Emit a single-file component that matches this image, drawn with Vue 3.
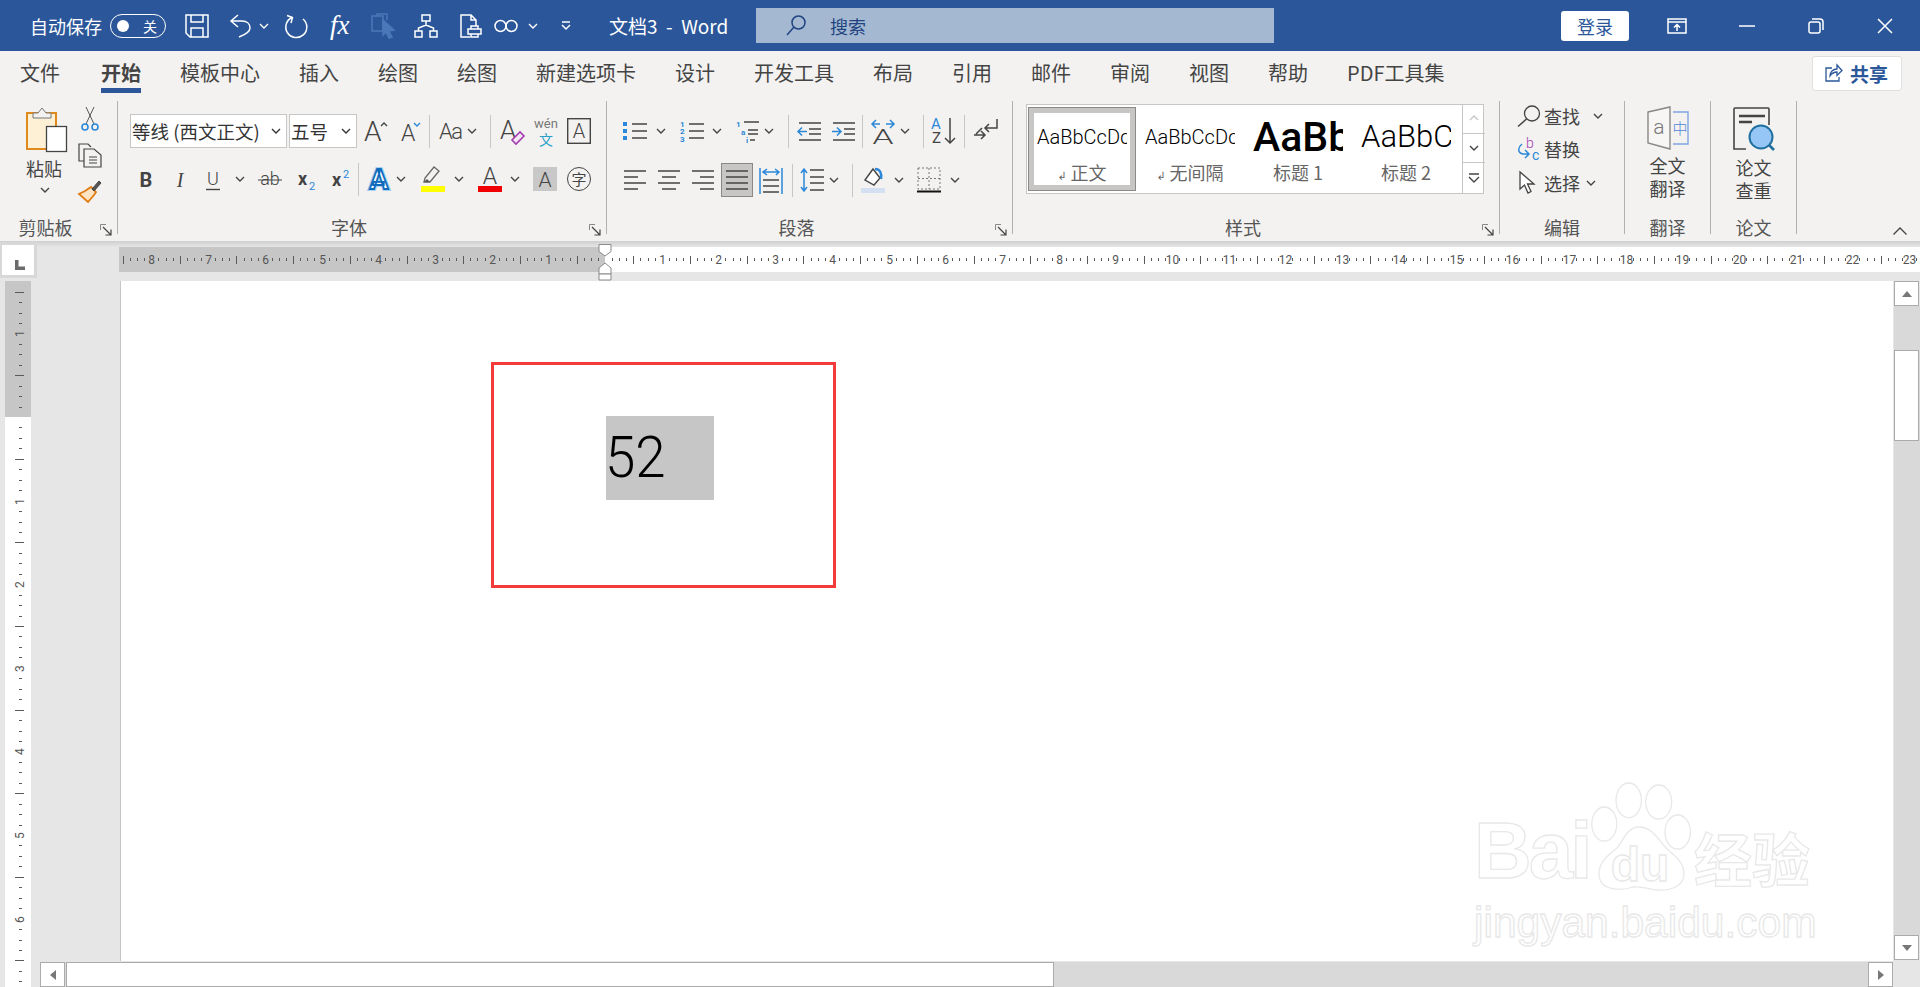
<template>
  <div class="app">
    <svg class="defs" width="0" height="0">
      <symbol id="chev" viewBox="0 0 10 6"><path d="M1 1l4 4 4-4" fill="none" stroke="currentColor" stroke-width="1.4" /></symbol>
      <symbol id="launcher" viewBox="0 0 12 12">
        <path d="M.5 6V.5H6" fill="none" stroke="#8a8886" />
        <path d="M3 3l8 8M11 5.5V11H5.5" fill="none" stroke="#444" stroke-width="1.2" />
      </symbol>
    </svg>

    <!-- 标题栏 -->
    <header class="titlebar">
      <span class="autosave">自动保存</span>
      <div class="toggle"><i class="knob"></i><span>关</span></div>
      <svg class="qat ml-19" width="24" height="24" viewBox="0 0 24 24"><path d="M1 1h22v22H5l-4-4zM6 1v7h12V1M6 23v-9h12v9" /></svg>
      <svg class="qat ml-20" width="22" height="24" viewBox="0 0 22 24"><path d="M9 1L2 7l7 6M2 7h11c5 0 8 3 8 7 0 3-3 6-11 9" /></svg>
      <svg class="chev-w ml-8" width="10" height="6"><use href="#chev" /></svg>
      <svg class="qat ml-15" width="25" height="24" viewBox="0 0 25 24"><path d="M8 3.5A10.5 10.5 0 1 0 19 5M3 1.5L8.5 3.5 7 9" /></svg>
      <span class="fx ml-21">fx</span>
      <svg class="qat off ml-20" width="25" height="24" viewBox="0 0 25 24"><path d="M1 2h11v15H1zM6 2V0h10v6" /><path class="fill" d="M12 6l11 10-5 1 3 6-3 1-3-6-3 3z" /></svg>
      <svg class="qat ml-18" width="24" height="24" viewBox="0 0 24 24"><path d="M8 1h8v6H8zM1 17h7v6H1zM16 17h7v6h-7zM12 7v4M4.5 17v-3l7.5-3 7.5 3v3" /></svg>
      <svg class="qat ml-22" width="22" height="24" viewBox="0 0 22 24"><path d="M10 23H1V1h10l5 5v6M11 1v5h5M8 15h13v5H8zM11 15v-3h7v3M11 20v3h7v-3" /></svg>
      <svg class="qat ml-12" width="24" height="14" viewBox="0 0 24 14"><circle cx="6.5" cy="7" r="5.5" /><circle cx="17.5" cy="7" r="5.5" /></svg>
      <svg class="chev-w ml-10" width="10" height="6"><use href="#chev" /></svg>
      <svg class="qat ml-23" width="10" height="10" viewBox="0 0 10 10"><path d="M1 1h8M1 4l4 4 4-4" /></svg>
      <span class="doc-title">文档3&nbsp; - &nbsp;Word</span>
      <div class="search">
        <svg class="qat search-ico" width="20" height="21" viewBox="0 0 20 21"><circle cx="12.5" cy="7.5" r="6.5" /><path d="M8 12L1 20" /></svg>
        <span>搜索</span>
      </div>
      <button class="login">登录</button>
      <svg class="qat ml-38" width="20" height="16" viewBox="0 0 20 16"><path d="M1 1h18v14H1zM1 4h18M10 13V7M7 9.500l3-3 3 3" /></svg>
      <svg class="qat ml-52" width="16" height="2" viewBox="0 0 16 2"><path d="M0 1h16" /></svg>
      <svg class="qat ml-53" width="16" height="16" viewBox="0 0 16 16"><rect x="1" y="4" width="11" height="11" rx="2" /><path d="M4 1h8a3 3 0 0 1 3 3v8" /></svg>
      <svg class="qat ml-53" width="16" height="16" viewBox="0 0 16 16"><path d="M1 1l14 14M15 1L1 15" /></svg>
    </header>

    <!-- 选项卡 -->
    <nav class="tabs">
      <span v-for="tab in tabs" :key="tab.id" :class="['tab', { active: tab.active }]">{{ tab.label }}</span>
      <button class="share">
        <svg width="18" height="18" viewBox="0 0 18 18" fill="none" stroke="#2b579a" stroke-width="1.3"><path d="M7 4H1v13h13v-4M5 12c0-4 3-7 7-7V1l5 5.500-5 5V8c-3 0-5 1-7 4z" /></svg>
        <span>共享</span>
      </button>
    </nav>

    <!-- 功能区 -->
    <section class="ribbon">
      <div class="group g-clip">
        <div class="body clip-body">
          <div class="paste">
            <svg width="41" height="45" viewBox="0 0 41 45">
              <rect x="1" y="6" width="29" height="36" fill="#fdf0d5" stroke="#e08a1e" stroke-width="2" />
              <path d="M7 11V6h5l4-5 4 5h5v5z" fill="#f3f2f1" stroke="#777" />
              <rect x="20.500" y="19.500" width="20" height="25" fill="#fff" stroke="#444" stroke-width="1.300" />
            </svg>
            <span class="paste-label">粘贴</span>
            <svg class="chev" width="10" height="6"><use href="#chev" /></svg>
          </div>
          <div class="clip-side">
            <svg width="24" height="24" viewBox="0 0 24 24" fill="none">
              <path d="M8 0l8 17M16 0L8 17" stroke="#555" />
              <circle cx="7" cy="20" r="3" stroke="#2b88d8" stroke-width="1.600" /><circle cx="17" cy="20" r="3" stroke="#2b88d8" stroke-width="1.600" />
            </svg>
            <svg width="24" height="24" viewBox="0 0 24 24" fill="none" stroke="#444" stroke-width="1.200">
              <path d="M6 18H1V1h9l3 3M6 6h10l7 6v12H6z" fill="#f3f2f1" /><path d="M11 14h8M11 17h8M11 20h8" stroke-width="1" />
            </svg>
            <svg width="24" height="24" viewBox="0 0 24 24" fill="none">
              <path d="M13 8l5 5-2 3-6 7-9-8 6-3z" fill="#fbe3c4" stroke="#e07b10" stroke-width="1.800" />
              <path d="M14 10l7-8 2 2-7 8z" fill="#555" stroke="#444" />
            </svg>
          </div>
        </div>
        <div class="foot"><span class="glabel">剪贴板</span><svg class="launch" width="12" height="12"><use href="#launcher" /></svg></div>
      </div>

      <div class="group g-font">
        <div class="body">
          <div class="row row-font1">
            <div class="select font-sel"><span>等线 (西文正文)</span><svg width="10" height="6"><use href="#chev" /></svg></div>
            <div class="select size-sel ml-2"><span>五号</span><svg width="10" height="6"><use href="#chev" /></svg></div>
            <svg class="ml-7" width="24" height="24" viewBox="0 0 24 24"><text x="0" y="22" font-size="28">A</text><path d="M17 7l3-3 3 3" fill="none" stroke="#444" stroke-width="1.400" /></svg>
            <svg class="ml-13" width="20" height="24" viewBox="0 0 20 24"><text x="0" y="22" font-size="23">A</text><path d="M13 4l3 3 3-3" fill="none" stroke="#2b88d8" stroke-width="1.400" /></svg>
            <i class="sep ml-8"></i>
            <svg class="ml-9" width="24" height="24" viewBox="0 0 24 24"><text x="0" y="20" font-size="22" textLength="24">Aa</text></svg>
            <svg class="ml-4 chev" width="10" height="6"><use href="#chev" /></svg>
            <i class="sep ml-13"></i>
            <svg class="ml-9" width="24" height="26" viewBox="0 0 24 26"><text x="0" y="21" font-size="26">A</text><path d="M12 22l8-8 4 4-8 8z" fill="#f3e6f5" stroke="#a43cb0" stroke-width="1.600" /></svg>
            <div class="wen ml-11"><span class="wen-py">wén</span><span class="wen-z">文</span></div>
            <svg class="ml-10" width="24" height="26" viewBox="0 0 24 26"><rect x=".7" y=".7" width="22.600" height="24.600" fill="none" stroke="#444" stroke-width="1.400" /><text x="12" y="20" font-size="20" text-anchor="middle">A</text></svg>
          </div>
          <div class="row row-font2">
            <svg width="24" height="24" viewBox="0 0 24 24"><text class="bold" x="12" y="20" font-size="20" text-anchor="middle">B</text></svg>
            <svg class="ml-10" width="24" height="24" viewBox="0 0 24 24"><text class="serif" x="12" y="20" font-size="20" font-style="italic" text-anchor="middle">I</text></svg>
            <svg class="ml-9" width="24" height="24" viewBox="0 0 24 24"><text x="12" y="18" font-size="18" text-anchor="middle">U</text><path d="M5 22.500h14" stroke="#444" stroke-width="1.400" /></svg>
            <svg class="ml-10 chev" width="10" height="6"><use href="#chev" /></svg>
            <svg class="ml-13" width="24" height="24" viewBox="0 0 24 24"><text x="12" y="18" font-size="18" text-anchor="middle">ab</text><path d="M0 13h24" stroke="#444" /></svg>
            <svg class="ml-13" width="24" height="24" viewBox="0 0 24 24"><text class="bold" x="3" y="18" font-size="18">x</text><text class="blue" x="14" y="23" font-size="11">2</text></svg>
            <svg class="ml-10" width="24" height="24" viewBox="0 0 24 24"><text class="bold" x="3" y="19" font-size="18">x</text><text class="blue" x="14" y="11" font-size="11">2</text></svg>
            <i class="sep ml-5"></i>
            <svg class="ml-8" width="24" height="26" viewBox="0 0 24 26"><text class="a-glow" x="12" y="23" font-size="28" text-anchor="middle">A</text><text class="a-outline" x="12" y="23" font-size="28" text-anchor="middle">A</text></svg>
            <svg class="ml-5 chev" width="10" height="6"><use href="#chev" /></svg>
            <svg class="ml-15" width="24" height="26" viewBox="0 0 24 26"><path d="M3 16l1-4 9-11 5 4-9 11z" fill="#f3f2f1" stroke="#666" stroke-width="1.300" /><path d="M3 16l6 0-3-3z" fill="#555" /><rect y="20" width="24" height="6" fill="#ffff00" /></svg>
            <svg class="ml-9 chev" width="10" height="6"><use href="#chev" /></svg>
            <svg class="ml-14" width="24" height="26" viewBox="0 0 24 26"><text x="12" y="18" font-size="23" text-anchor="middle">A</text><rect y="20" width="24" height="6" fill="#f00000" /></svg>
            <svg class="ml-8 chev" width="10" height="6"><use href="#chev" /></svg>
            <svg class="ml-13" width="24" height="24" viewBox="0 0 24 24"><rect width="24" height="24" fill="#c8c8c8" /><text x="12" y="20" font-size="21" text-anchor="middle">A</text></svg>
            <div class="ringed ml-10">字</div>
          </div>
        </div>
        <div class="foot"><span class="glabel">字体</span><svg class="launch" width="12" height="12"><use href="#launcher" /></svg></div>
      </div>

      <div class="group g-para">
        <div class="body">
          <div class="row row-para1">
            <svg width="24" height="24" viewBox="0 0 24 24"><path class="ln" d="M9 5h15M9 12h15M9 19h15" /><path fill="#2b88d8" d="M0 3h4v4H0zM0 10h4v4H0zM0 17h4v4H0z" /></svg>
            <svg class="ml-9 chev" width="10" height="6"><use href="#chev" /></svg>
            <svg class="ml-14" width="24" height="24" viewBox="0 0 24 24"><path class="ln" d="M9 5h15M9 12h15M9 19h15" /><text class="blue bold" x="0" y="8" font-size="8">1</text><text class="blue bold" x="0" y="15" font-size="8">2</text><text class="blue bold" x="0" y="23" font-size="8">3</text></svg>
            <svg class="ml-8 chev" width="10" height="6"><use href="#chev" /></svg>
            <svg class="ml-14" width="24" height="24" viewBox="0 0 24 24"><path class="ln" d="M8 3h15M12 11h10M12 15h10M14 21h5" /><text class="blue bold" x="0" y="8" font-size="8">1</text><text class="blue bold" x="5" y="16" font-size="8">a</text><text class="blue bold" x="10" y="24" font-size="8">i</text></svg>
            <svg class="ml-4 chev" width="10" height="6"><use href="#chev" /></svg>
            <i class="sep ml-14"></i>
            <svg class="ml-8" width="24" height="24" viewBox="0 0 24 24"><path class="ln" d="M2 4h22M12 10h12M12 15h12M2 21h22" /><path class="ar" d="M10 12.500H1M5 8.500l-4 4 4 4" /></svg>
            <svg class="ml-10" width="24" height="24" viewBox="0 0 24 24"><path class="ln" d="M2 4h22M13 10h11M13 15h11M2 21h22" /><path class="ar" d="M1 12.500h9M6 8.500l4 4-4 4" /></svg>
            <i class="sep ml-7"></i>
            <svg class="ml-8" width="24" height="26" viewBox="0 0 24 26"><path class="ar" d="M1 6h8M5 2L1 6l4 4M15 6h8M19 2l4 4-4 4" /><text transform="translate(12 26) scale(1.6 1)" font-size="21" text-anchor="middle">A</text></svg>
            <svg class="ml-5 chev" width="10" height="6"><use href="#chev" /></svg>
            <i class="sep ml-13"></i>
            <svg class="ml-7" width="26" height="28" viewBox="0 0 26 28"><text class="blue" x="0" y="12" font-size="15">A</text><text class="reg" x="1" y="26" font-size="15">Z</text><path class="ln" d="M19 1v25M14 21l5 5 5-5" /></svg>
            <i class="sep ml-7"></i>
            <svg class="ml-8" width="25" height="24" viewBox="0 0 25 24"><path class="ln" d="M24 0v9H12M16 5l-4 4 4 4M1 16h11M8 12l4 4-4 4M9 9L3 15" /></svg>
          </div>
          <div class="row row-para2">
            <svg width="22" height="24" viewBox="0 0 22 24"><path class="ln" d="M0 3h22M0 9h14M0 15h22M0 21h14" /></svg>
            <svg class="ml-12" width="22" height="24" viewBox="0 0 22 24"><path class="ln" d="M0 3h22M4 9h14M0 15h22M4 21h14" /></svg>
            <svg class="ml-12" width="22" height="24" viewBox="0 0 22 24"><path class="ln" d="M0 3h22M8 9h14M0 15h22M8 21h14" /></svg>
            <div class="pressed ml-7"><svg width="22" height="24" viewBox="0 0 22 24"><path class="ln" d="M0 3h22M0 9h22M0 15h22M0 21h22" /></svg></div>
            <svg class="ml-6" width="24" height="28" viewBox="0 0 24 28"><path class="ar" d="M1 2v26M23 2v26M4 6h16M8 3L4 6l4 3M16 3l4 3-3 3" /><path class="ln" d="M4 14h16M4 20h16M4 26h16" /></svg>
            <i class="sep ml-9"></i>
            <svg class="ml-7" width="24" height="26" viewBox="0 0 24 26"><path class="ar" d="M4 2v22M1 6l3-4 3 4M1 20l3 4 3-4" /><path class="ln" d="M10 3h14M10 10h14M10 16h14M10 23h14" /></svg>
            <svg class="ml-5 chev" width="10" height="6"><use href="#chev" /></svg>
            <i class="sep ml-13"></i>
            <svg class="ml-8" width="24" height="26" viewBox="0 0 24 26"><path d="M4 13l8-11 7 9-6 7z" fill="#fff" stroke="#444" stroke-width="1.400" /><path d="M14 2c5 0 7 4 6 10" fill="none" stroke="#2b88d8" stroke-width="2.500" /><rect y="21" width="24" height="5" fill="#d4e0f2" /></svg>
            <svg class="ml-9 chev" width="10" height="6"><use href="#chev" /></svg>
            <svg class="ml-13" width="24" height="26" viewBox="0 0 24 26"><path d="M1 1h22v21H1zM1 11.500h22M12 1v21" fill="none" stroke="#777" stroke-dasharray="2 2" /><path d="M0 24.500h24" stroke="#111" stroke-width="2" /></svg>
            <svg class="ml-9 chev" width="10" height="6"><use href="#chev" /></svg>
          </div>
        </div>
        <div class="foot"><span class="glabel">段落</span><svg class="launch" width="12" height="12"><use href="#launcher" /></svg></div>
      </div>

      <div class="group g-style">
        <div class="body">
          <div class="gallery">
            <div v-for="s in styles" :key="s.name" :class="['style-item', { selected: s.selected }]">
              <div :class="['sample', s.cls]">AaBbCcDd</div>
              <div class="style-name"><span v-if="s.mark" class="mark">↲</span>{{ s.name }}</div>
            </div>
            <div class="gallery-btns">
              <div class="gbtn disabled"><svg width="10" height="6"><use href="#chev" transform="rotate(180 5 3)" /></svg></div>
              <div class="gbtn"><svg width="10" height="6"><use href="#chev" /></svg></div>
              <div class="gbtn more"><svg width="12" height="11" viewBox="0 0 12 11"><path d="M1 1h10M1 4l5 5 5-5" fill="none" stroke="#444" stroke-width="1.400" /></svg></div>
            </div>
          </div>
        </div>
        <div class="foot"><span class="glabel">样式</span><svg class="launch" width="12" height="12"><use href="#launcher" /></svg></div>
      </div>

      <div class="group g-edit">
        <div class="body edit-body">
          <div class="edit-row">
            <svg width="24" height="22" viewBox="0 0 24 22" fill="none" stroke="#444" stroke-width="1.300"><circle cx="15" cy="8.500" r="7.500" /><path d="M9.500 14L1 21.500" stroke-width="1.600" /></svg>
            <span>查找</span><svg class="chev find-chev" width="10" height="6"><use href="#chev" /></svg>
          </div>
          <div class="edit-row">
            <svg width="24" height="24" viewBox="0 0 24 24"><text class="purple" x="9" y="11" font-size="14">b</text><text class="blue" x="15" y="23" font-size="14">c</text><path class="ar" d="M5 7C0 11 1 16 6 17h6M8 13l4 4-4 4" /></svg>
            <span>替换</span>
          </div>
          <div class="edit-row">
            <svg width="24" height="23" viewBox="0 0 24 23"><path d="M3 1v17l4.500-4L11 22l3-1.500L10.500 13H17z" fill="#fff" stroke="#444" stroke-width="1.300" /></svg>
            <span>选择</span><svg class="chev sel-chev" width="10" height="6"><use href="#chev" /></svg>
          </div>
        </div>
        <div class="foot"><span class="glabel solo">编辑</span></div>
      </div>

      <div class="group g-tool">
        <div class="body tool-body">
          <svg width="42" height="42" viewBox="0 0 42 42">
            <path d="M1 5L23 0v42L1 36z" fill="#f7f6f5" stroke="#8a8886" stroke-width="1.400" />
            <text class="t-gray" x="12" y="27" font-size="21" text-anchor="middle">a</text>
            <path d="M26 5h15v32H26" fill="none" stroke="#7ea6e0" stroke-width="1.400" />
            <text class="t-cn" x="33" y="27" font-size="15" text-anchor="middle">中</text>
          </svg>
          <div class="tool-text">全文<br />翻译</div>
        </div>
        <div class="foot"><span class="glabel solo">翻译</span></div>
      </div>

      <div class="group g-tool">
        <div class="body tool-body">
          <svg width="42" height="44" viewBox="0 0 42 44">
            <path d="M13 42H1V2q0-1 1-1h33q1 0 1 1v16" fill="none" stroke="#444" stroke-width="1.600" />
            <path d="M6 9h26M6 15h13" stroke="#444" stroke-width="2.400" />
            <circle cx="28" cy="30" r="11.500" fill="#95c6f5" stroke="#1f6f9f" stroke-width="2" />
            <path d="M36 38l5 5" stroke="#1f6f9f" stroke-width="2.600" />
          </svg>
          <div class="tool-text">论文<br />查重</div>
        </div>
        <div class="foot"><span class="glabel solo">论文</span></div>
      </div>

      <svg class="collapse" width="14" height="8" viewBox="0 0 14 8"><path d="M.5 7.500L7 1l6.500 6.500" fill="none" stroke="#444" stroke-width="1.300" /></svg>
    </section>

    <!-- 标尺 -->
    <div class="ruler-row">
      <div class="corner"><svg width="10" height="10" viewBox="0 0 10 10"><path d="M0 0h3.500v6.500H10V10H0z" fill="#6b6b6b" /></svg></div>
      <svg class="hruler" width="1801" height="40" viewBox="0 0 1801 40">
        <rect y="6" width="486" height="25" fill="#c6c6c6" />
        <rect x="486" y="6" width="1315" height="25" fill="#fff" />
        <path :d="hTicks" stroke="#5a5a5a" fill="none" />
        <text v-for="n in hLabels" :key="n.x" class="rlabel" :x="n.x" y="23" text-anchor="middle" font-size="12">{{ n.text }}</text>
        <path d="M480 3.500h12v7l-6 4.500-6-4.500z" fill="#fff" stroke="#8a8a8a" />
        <path d="M486 22l6 5v6h-12v-6z" fill="#fff" stroke="#8a8a8a" />
        <path d="M480 33h12v6h-12z" fill="#fff" stroke="#8a8a8a" />
      </svg>
    </div>

    <div class="workspace">
      <svg class="vruler" width="26" height="706" viewBox="0 0 26 706">
        <rect width="26" height="136" fill="#c6c6c6" />
        <rect y="136" width="26" height="570" fill="#fff" />
        <path :d="vTicks" stroke="#5a5a5a" fill="none" />
        <text v-for="n in vLabels" :key="n.y" class="rlabel" x="19" :y="n.y" :transform="`rotate(-90 19 ${n.y})`" text-anchor="middle" font-size="12">{{ n.text }}</text>
      </svg>

      <div class="main">
        <div class="page">
          <div class="red-box">
            <div class="selection"><span class="num">52</span></div>
          </div>
          <!-- 水印 -->
          <div class="watermark">
            <div class="wm-top">
              <span class="wm-bai">Bai</span>
              <svg class="wm-paw" width="100" height="109" viewBox="0 0 100 109">
                <ellipse cx="13.300" cy="41" rx="12.500" ry="17" />
                <ellipse cx="37.700" cy="17.300" rx="12.700" ry="17.300" />
                <ellipse cx="67.700" cy="19" rx="13" ry="17" />
                <ellipse cx="86.700" cy="49" rx="12.700" ry="17" />
                <path d="M48 44C62 44 68 58 76 66C84 73 93 79 93 91C93 104 78 108 66 107C58 106 50 103 42 104C30 108 8 108 8 91C8 78 18 72 26 65C32 58 36 44 48 44Z" />
                <text x="49" y="98" font-size="48" text-anchor="middle" class="wm-du">du</text>
              </svg>
              <span class="wm-cn">经验</span>
            </div>
            <div class="wm-url">jingyan.baidu.com</div>
          </div>
        </div>
        <div class="hscroll">
          <div class="sbtn"><i class="tri-left"></i></div>
          <div class="hthumb"></div>
          <div class="sbtn hright"><i class="tri-right"></i></div>
        </div>
      </div>

      <div class="vscroll">
        <div class="sbtn"><i class="tri-up"></i></div>
        <div class="vtrack"><div class="vthumb"></div></div>
        <div class="sbtn"><i class="tri-down"></i></div>
      </div>
    </div>
  </div>
</template>

<script setup>
const tabs = ["文件", "开始", "模板中心", "插入", "绘图", "绘图", "新建选项卡", "设计", "开发工具", "布局", "引用", "邮件", "审阅", "视图", "帮助", "PDF工具集"]
  .map((label, id) => ({ id, label, active: label === "开始" }));

const styles = [
  { name: "正文", cls: "s-normal", mark: true, selected: true },
  { name: "无间隔", cls: "s-normal", mark: true },
  { name: "标题 1", cls: "s-h1" },
  { name: "标题 2", cls: "s-h2" }
];

// 标尺刻度：每英寸分 8 格，整数处写数字，半格画长线
const H_UNIT = 56.7;
const V_UNIT = 83.6;

let h = "";
const hLabels = [];
for (let i = -68; i <= 185; i++) {
  const x = Math.round(486 + (i * H_UNIT) / 8) + 0.5;
  if (i % 8 === 0) {
    if (i !== 0) hLabels.push({ x, text: Math.abs(i / 8) });
  } else if (i % 4 === 0) {
    h += `M${x} 15v8`;
  } else {
    h += `M${x} 17v3`;
  }
}
const hTicks = h;

let v = "";
const vLabels = [];
for (let i = -12; i <= 67; i++) {
  const y = Math.round(136 + (i * V_UNIT) / 8) + 0.5;
  if (i % 8 === 0) {
    if (i !== 0) vLabels.push({ y, text: Math.abs(i / 8) });
  } else if (i % 4 === 0) {
    v += `M10 ${y}h9`;
  } else {
    v += `M14 ${y}h3`;
  }
}
const vTicks = v;
</script>

<style>
html, body { margin: 0; background: #e6e6e6; overflow: hidden; }
</style>

<style scoped>
.app {
  width: 1920px;
  height: 987px;
  overflow: hidden;
  display: flex;
  flex-direction: column;
  background: #e6e6e6;
  font-family: "Noto Sans CJK SC", "Noto Sans", sans-serif;
  color: #444;
}
.defs { position: absolute; }
svg { flex: none; display: block; overflow: visible; }
text { font-family: Roboto, "Noto Sans CJK SC", sans-serif; fill: #444; font-weight: 300; }
text.blue { fill: #2b88d8; font-weight: 400; }
text.bold { font-weight: 700; }
text.reg { font-weight: 400; }
text.serif { font-family: "Liberation Serif", serif; }
text.purple { fill: #a43cb0; }
text.t-gray { fill: #777; }
text.t-cn { fill: #4f86d8; }
text.a-glow { font-weight: 700; fill: none; stroke: #a8d0f0; stroke-width: 4; }
text.a-outline { font-weight: 700; fill: #fff; stroke: #0f6cbd; stroke-width: 1.800; }
.ln { fill: none; stroke: #444; stroke-width: 1.5; }
.ar { fill: none; stroke: #2b88d8; stroke-width: 1.5; }

.ml-2 { margin-left: 2px; } .ml-4 { margin-left: 4px; } .ml-5 { margin-left: 5px; }
.ml-6 { margin-left: 6px; } .ml-7 { margin-left: 7px; } .ml-8 { margin-left: 8px; }
.ml-9 { margin-left: 9px; } .ml-10 { margin-left: 10px; } .ml-11 { margin-left: 11px; }
.ml-12 { margin-left: 12px; } .ml-13 { margin-left: 13px; } .ml-14 { margin-left: 14px; }
.ml-15 { margin-left: 15px; } .ml-18 { margin-left: 18px; } .ml-19 { margin-left: 19px; }
.ml-20 { margin-left: 20px; } .ml-21 { margin-left: 21px; } .ml-22 { margin-left: 22px; }
.ml-23 { margin-left: 23px; } .ml-38 { margin-left: 38px; } .ml-52 { margin-left: 52px; }
.ml-53 { margin-left: 53px; }

/* 标题栏 */
.titlebar {
  height: 51px;
  flex: none;
  display: flex;
  align-items: center;
  padding-left: 30px;
  background: #2b579a;
  color: #fff;
}
.autosave { width: 71px; font-size: 18px; white-space: nowrap; }
.toggle {
  box-sizing: border-box;
  width: 56px;
  height: 24px;
  margin-left: 9px;
  display: flex;
  align-items: center;
  border: 1.500px solid #fff;
  border-radius: 12px;
  font-size: 14px;
}
.knob { width: 12px; height: 12px; margin-left: 6px; border-radius: 50%; background: #fff; }
.toggle span { margin-left: 14px; }
.qat { fill: none; stroke: #fff; stroke-width: 1.500; }
.qat.off { stroke: #4b78b8; }
.qat.off .fill { fill: #4b78b8; }
.chev-w { color: #fff; }
.fx {
  width: 21px;
  font: italic 400 27px "Liberation Serif", serif;
}
.doc-title { margin-left: 38px; width: 147px; font-size: 19px; white-space: nowrap; }
.search {
  width: 518px;
  height: 35px;
  display: flex;
  align-items: center;
  background: #a5b8d2;
  color: #1f4480;
  font-size: 18px;
}
.search-ico { stroke: #1f4480; margin-left: 30px; margin-right: 24px; }
.login {
  width: 68px;
  height: 30px;
  margin-left: 287px;
  border: 0;
  border-radius: 3px;
  background: #fff;
  color: #2b579a;
  font: 18px "Noto Sans CJK SC", sans-serif;
  padding: 0;
}

/* 选项卡 */
.tabs {
  height: 44px;
  flex: none;
  display: flex;
  align-items: center;
  gap: 39px;
  padding-left: 20px;
  background: #f3f2f1;
  font-size: 20px;
  white-space: nowrap;
}
.tab { position: relative; height: 44px; line-height: 44px; color: #444; }
.tab:first-child { margin-right: 2px; }
.tab.active { font-weight: 700; }
.tab.active::after {
  content: "";
  position: absolute;
  left: 0;
  right: 0;
  bottom: 2px;
  height: 5px;
  background: #2b579a;
}
.share {
  box-sizing: border-box;
  width: 90px;
  height: 35px;
  margin: 0 18px 0 auto;
  padding: 0 0 0 12px;
  display: flex;
  align-items: center;
  gap: 7px;
  background: #fff;
  border: 1px solid #e1dfdd;
  border-radius: 3px;
  color: #2b579a;
  font: 700 19px "Noto Sans CJK SC", sans-serif;
}

/* 功能区 */
.ribbon {
  position: relative;
  height: 146px;
  flex: none;
  display: flex;
  align-items: flex-start;
  padding-top: 6px;
  box-sizing: border-box;
  background: #f3f2f1;
}
.group {
  box-sizing: border-box;
  height: 133px;
  flex: none;
  display: flex;
  flex-direction: column;
  border-right: 1px solid #b3b0ad;
}
.g-clip { width: 118px; }
.g-font { width: 489px; }
.g-para { width: 406px; }
.g-style { width: 487px; }
.g-edit { width: 125px; }
.g-tool { width: 86px; }
.body { flex: 1; min-height: 0; }
.foot { height: 18px; display: flex; flex: none; }
.glabel { flex: 1; text-align: center; font-size: 18px; line-height: 22px; color: #555; white-space: nowrap; }
.launch { margin: 8px 5px 0 9px; }
.chev { color: #444; }

/* 剪贴板 */
.clip-body { display: flex; padding: 6px 0 0 24px; }
.paste { width: 41px; margin-left: 2px; display: flex; flex-direction: column; align-items: center; }
.paste-label { margin-top: 3px; width: 37px; margin-left: -4px; font-size: 18px; line-height: 26px; }
.paste .chev { margin: 6px 0 0 -4px; }
.clip-side { margin-left: 11px; display: flex; flex-direction: column; gap: 12px; }

/* 行 */
.row { height: 34px; display: flex; align-items: center; }
.row-font1 { margin-top: 13px; padding-left: 12px; }
.row-font2 { margin-top: 14px; padding-left: 16px; }
.row-para1 { margin-top: 13px; padding-left: 16px; }
.row-para2 { margin-top: 15px; padding-left: 17px; }
.sep { width: 1px; height: 33px; background: #c8c6c4; flex: none; }
.select {
  box-sizing: border-box;
  height: 34px;
  display: flex;
  align-items: center;
  justify-content: space-between;
  padding: 0 5px 0 1px;
  background: #fff;
  border: 1px solid #c8c6c4;
  font-size: 18.500px;
  color: #333;
  white-space: nowrap;
}
.font-sel { width: 157px; }
.size-sel { width: 68px; }
.wen { width: 22px; display: flex; flex-direction: column; align-items: center; line-height: 1; }
.wen-py { font: 13px Roboto, sans-serif; color: #777; }
.wen-z { font-size: 14px; color: #2aa0c8; margin-top: 1px; }
.ringed {
  box-sizing: border-box;
  width: 24px;
  height: 24px;
  border: 1.300px solid #444;
  border-radius: 50%;
  font-size: 15px;
  line-height: 21px;
  text-align: center;
  flex: none;
}
.pressed {
  box-sizing: border-box;
  width: 32px;
  height: 34px;
  display: flex;
  align-items: center;
  justify-content: center;
  background: #c8c6c4;
  border: 1px solid #8a8886;
  flex: none;
}

/* 样式库 */
.gallery {
  box-sizing: border-box;
  width: 458px;
  height: 90px;
  margin: 3px 0 0 13px;
  padding: 2px 0 0 1px;
  display: flex;
  background: #fff;
  border: 1px solid #c8c6c4;
}
.style-item { box-sizing: border-box; width: 108px; height: 84px; padding: 6px 9px 0; flex: none; }
.style-item.selected { box-shadow: inset 0 0 0 1px #8a8a8a, inset 0 0 0 6px #c8c6c4; }
.sample {
  width: 90px;
  height: 46px;
  overflow: hidden;
  white-space: nowrap;
  color: #000;
  line-height: 48px;
  font-family: Roboto, sans-serif;
}
.s-normal { font-size: 20px; font-weight: 300; }
.s-h1 { font-size: 41px; font-weight: 500; }
.s-h2 { font-size: 31px; font-weight: 300; }
.style-name { text-align: center; font-size: 18px; line-height: 26px; color: #666; white-space: nowrap; }
.mark { font: 11px "DejaVu Sans", sans-serif; margin-right: 4px; }
.gallery-btns { margin: -3px 0 0 2px; width: 23px; flex: none; display: flex; flex-direction: column; }
.gbtn {
  box-sizing: border-box;
  width: 23px;
  height: 30px;
  display: flex;
  align-items: center;
  justify-content: center;
  border-left: 1px solid #c8c6c4;
  border-bottom: 1px solid #c8c6c4;
  color: #444;
}
.gbtn.disabled { color: #c8c6c4; }
.gbtn.more { border-bottom: 0; }

/* 编辑 */
.edit-body { padding: 0 0 0 17px; margin-top: -2px; }
.edit-row { height: 33.500px; display: flex; align-items: center; gap: 3px; font-size: 18px; color: #444; }
.find-chev { margin-left: 10px; }
.sel-chev { margin-left: 3px; }
.glabel.solo { flex: 1; }

.tool-body { padding-top: 6px; display: flex; flex-direction: column; align-items: center; }
.tool-text { margin-top: 5px; font-size: 18px; line-height: 23px; text-align: center; color: #444; }

.collapse { position: absolute; right: 13px; top: 132px; }

/* 标尺 */
.ruler-row {
  height: 40px;
  flex: none;
  display: flex;
  background: linear-gradient(#cfcfcf, #e6e6e6 6px);
}
.corner {
  box-sizing: border-box;
  width: 37px;
  height: 36px;
  margin-top: 1px;
  padding: 15px 0 0 13px;
  background: #fff;
  border: 3px solid #d8d8d8;
  border-left-width: 2px;
}
.hruler { margin-left: 82px; }
.rlabel { fill: #555; font-weight: 400; }

.workspace { flex: 1; min-height: 0; display: flex; }
.vruler { margin-left: 5px; }
.main { width: 1853px; margin-left: 9px; height: 706px; display: flex; flex-direction: column; }
.page {
  position: relative;
  box-sizing: border-box;
  height: 680px;
  margin-left: 80px;
  padding: 81px 0 0 370px;
  background: #fff;
  border-left: 1px solid #c6c6c6;
  overflow: hidden;
}
.red-box {
  box-sizing: border-box;
  width: 345px;
  height: 226px;
  padding: 51px 0 0 112px;
  border: 3px solid #f53a3a;
}
.selection { width: 108px; height: 84px; background: #c6c6c6; }
.num {
  display: block;
  margin-left: -1px;
  font: 300 57px/84px Roboto, sans-serif;
  color: #000;
  transform: scaleX(0.96);
  transform-origin: left;
}

/* 水印 */
.watermark { position: absolute; left: 1353px; top: 502px; }
.wm-top { display: flex; align-items: flex-end; height: 109px; }
.wm-bai,
.wm-cn,
.wm-url {
  color: #fff;
  -webkit-text-stroke: 1.300px #e8e8e8;
  white-space: nowrap;
}
.wm-bai { width: 117px; font: 700 80px/82px "Liberation Sans", sans-serif; letter-spacing: -3px; }
.wm-paw { fill: #fff; stroke: #e8e8e8; stroke-width: 1.300; }
text.wm-du { fill: #fff; stroke: #e8e8e8; stroke-width: 1.300; font-family: "Liberation Sans", sans-serif; font-weight: 700; }
.wm-cn { margin-left: 3px; font: 700 58px/70px "Noto Sans CJK SC", sans-serif; }
.wm-url { margin-top: 7px; font: 42.500px/48px "Liberation Sans", sans-serif; }

/* 滚动条 */
.sbtn {
  box-sizing: border-box;
  width: 25px;
  height: 25px;
  flex: none;
  display: flex;
  align-items: center;
  justify-content: center;
  background: #fff;
  border: 1px solid #ababab;
}
.hscroll { display: flex; height: 25px; margin-top: 1px; background: #d9d9d9; }
.hthumb { box-sizing: border-box; width: 988px; margin-left: 1px; background: #fff; border: 1px solid #ababab; }
.hright { margin-left: auto; }
.vscroll { width: 26px; margin-left: 1px; height: 679px; display: flex; flex-direction: column; }
.vtrack { flex: 1; min-height: 0; padding-top: 44px; background: #d9d9d9; }
.vthumb { box-sizing: border-box; height: 91px; width: 25px; background: #fff; border: 1px solid #ababab; }
.tri-up { border: 5px solid transparent; border-bottom: 6px solid #777; border-top: 0; }
.tri-down { border: 5px solid transparent; border-top: 6px solid #777; border-bottom: 0; }
.tri-left { border: 5px solid transparent; border-right: 6px solid #777; border-left: 0; }
.tri-right { border: 5px solid transparent; border-left: 6px solid #777; border-right: 0; }
</style>
